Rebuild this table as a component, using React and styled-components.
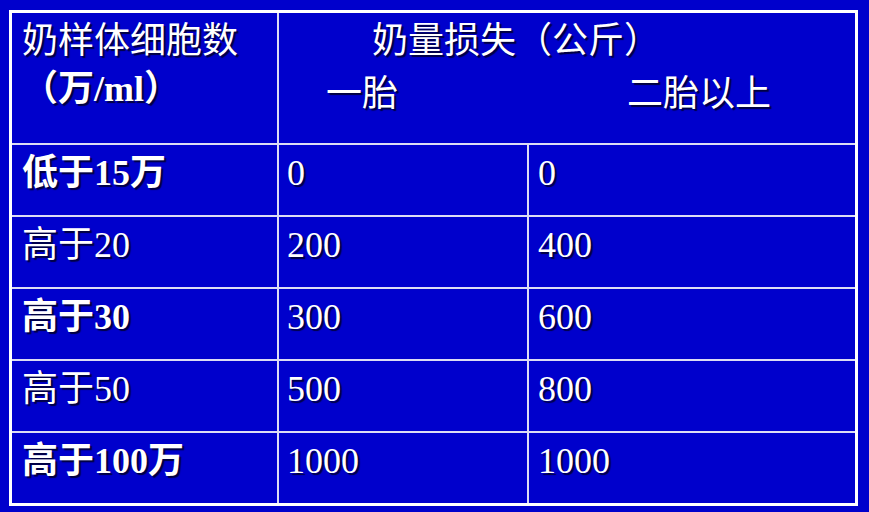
import styled, { createGlobalStyle } from "styled-components";

const rows = [
  { label: "低于15万", bold: true, first: "0", second: "0" },
  { label: "高于20", bold: false, first: "200", second: "400" },
  { label: "高于30", bold: true, first: "300", second: "600" },
  { label: "高于50", bold: false, first: "500", second: "800" },
  { label: "高于100万", bold: true, first: "1000", second: "1000" },
];

export default function App() {
  return (
    <>
      <$Global />
      <$Table>
        <$HeadCell>
          <$Line>奶样体细胞数</$Line>
          <$Line $bold>（万/ml）</$Line>
        </$HeadCell>
        <$HeadCell $span>
          <$Title>奶量损失（公斤）</$Title>
          <$SubRow>
            <$Sub>一胎</$Sub>
            <$Sub>二胎以上</$Sub>
          </$SubRow>
        </$HeadCell>
        {rows.map((r) => (
          <Row key={r.label} {...r} />
        ))}
      </$Table>
    </>
  );
}

function Row({ label, bold, first, second }) {
  return (
    <>
      <$Cell $bold={bold} $pad={10}>
        {label}
      </$Cell>
      <$Cell $pad={8}>{first}</$Cell>
      <$Cell $pad={9}>{second}</$Cell>
    </>
  );
}

// ====== Styles ======
const $Global = createGlobalStyle`
  body {
    margin: 0;
    background: #0000cc;
  }
`;

const $Table = styled.div`
  box-sizing: border-box;
  margin: 10px 0 0 9px;
  width: 849px;
  height: 496px;
  border: 3px solid #ffffff;
  display: grid;
  grid-template-columns: 265px 248px 1fr;
  grid-template-rows: 130px repeat(5, 1fr);
  gap: 2px;
  background: #dcdcf4;
  color: #ffffff;
  font-family: "Liberation Serif", "Noto Sans CJK SC", serif;
  font-size: 36px;
  text-shadow: 2px 2px 1px #000040;
`;

const $Base = styled.div`
  background: #0000cc;
  box-sizing: border-box;
`;

const $HeadCell = styled($Base)`
  grid-column: ${(p) => (p.$span ? "2 / 4" : "auto")};
  padding: 4px 0 0 ${(p) => (p.$span ? "0" : "10px")};
  display: flex;
  flex-direction: column;
`;

const $Line = styled.div`
  line-height: 48px;
  font-weight: ${(p) => (p.$bold ? 700 : 400)};
`;

const $Title = styled.div`
  line-height: 48px;
  padding-left: 93px;
`;

const $SubRow = styled.div`
  display: flex;
  gap: 229px;
  padding-left: 47px;
  line-height: 48px;
  margin-top: 5px;
`;

const $Sub = styled.div``;

const $Cell = styled($Base)`
  padding: 5px 0 0 ${(p) => p.$pad}px;
  line-height: 46px;
  font-weight: ${(p) => (p.$bold ? 700 : 400)};
`;
